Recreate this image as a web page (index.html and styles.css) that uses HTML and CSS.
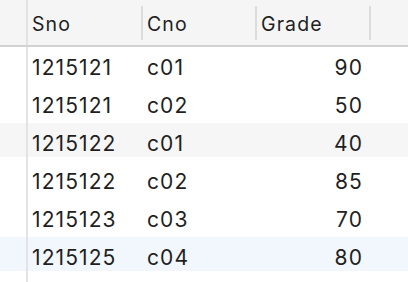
FILE: index.html
```html
<!DOCTYPE html>
<html>
<head>
<meta charset="utf-8">
<link rel="stylesheet" href="styles.css">
</head>
<body>
<div class="grid">
  <div class="head">
    <div class="gutter"></div>
    <div class="hcell c1">Sno</div>
    <div class="hcell c2">Cno</div>
    <div class="hcell c3">Grade</div>
    <div class="fill"></div>
  </div>
  <div class="row">
    <div class="gutter"></div>
    <div class="cell c1">1215121</div>
    <div class="cell c2">c01</div>
    <div class="cell c3 num">90</div>
    <div class="fill"></div>
  </div>
  <div class="row">
    <div class="gutter"></div>
    <div class="cell c1">1215121</div>
    <div class="cell c2">c02</div>
    <div class="cell c3 num">50</div>
    <div class="fill"></div>
  </div>
  <div class="row striped">
    <div class="gutter"></div>
    <div class="cell c1">1215122</div>
    <div class="cell c2">c01</div>
    <div class="cell c3 num">40</div>
    <div class="fill"></div>
  </div>
  <div class="row">
    <div class="gutter"></div>
    <div class="cell c1">1215122</div>
    <div class="cell c2">c02</div>
    <div class="cell c3 num">85</div>
    <div class="fill"></div>
  </div>
  <div class="row">
    <div class="gutter"></div>
    <div class="cell c1">1215123</div>
    <div class="cell c2">c03</div>
    <div class="cell c3 num">70</div>
    <div class="fill"></div>
  </div>
  <div class="row hover">
    <div class="gutter"></div>
    <div class="cell c1">1215125</div>
    <div class="cell c2">c04</div>
    <div class="cell c3 num">80</div>
    <div class="fill"></div>
  </div>
  <div class="tail">
    <div class="gutter"></div>
  </div>
</div>
</body>
</html>
```

FILE: styles.css
```css
html, body {
  margin: 0;
  padding: 0;
  background: #ffffff;
}
body {
  width: 408px;
  height: 282px;
  overflow: hidden;
  font-family: "Inter", "Liberation Sans", sans-serif;
  color: #1f1f1f;
}
.grid {
  display: flex;
  flex-direction: column;
  height: 282px;
}
.head {
  display: flex;
  align-items: center;
  height: 45px;
  background: #f5f5f5;
  border-bottom: 2px solid #d2d2d2;
  font-size: 19.5px;
  letter-spacing: 1.1px;
}
.gutter {
  width: 26px;
  flex: none;
  align-self: stretch;
  border-right: 2px solid #e3e3e3;
}
.hcell {
  height: 34px;
  line-height: 36px;
  padding-left: 4px;
  border-right: 2px solid #dcdcdc;
  box-sizing: border-box;
  flex: none;
}
.c1 { width: 115px; }
.c2 { width: 114px; }
.c3 { width: 114px; }
.fill { flex: 1; }
.row {
  display: flex;
  height: 38px;
  font-size: 21px;
  letter-spacing: 1.1px;
}
.cell {
  flex: none;
  box-sizing: border-box;
  padding: 4px 8px 0 4px;
  line-height: 34px;
}
.num { text-align: right; }
.striped {
  background: linear-gradient(#f6f6f6 34px, transparent 34px);
}
.hover {
  background: linear-gradient(#f2f7fd 34px, transparent 34px);
}
.tail {
  display: flex;
  flex: 1;
}
```
